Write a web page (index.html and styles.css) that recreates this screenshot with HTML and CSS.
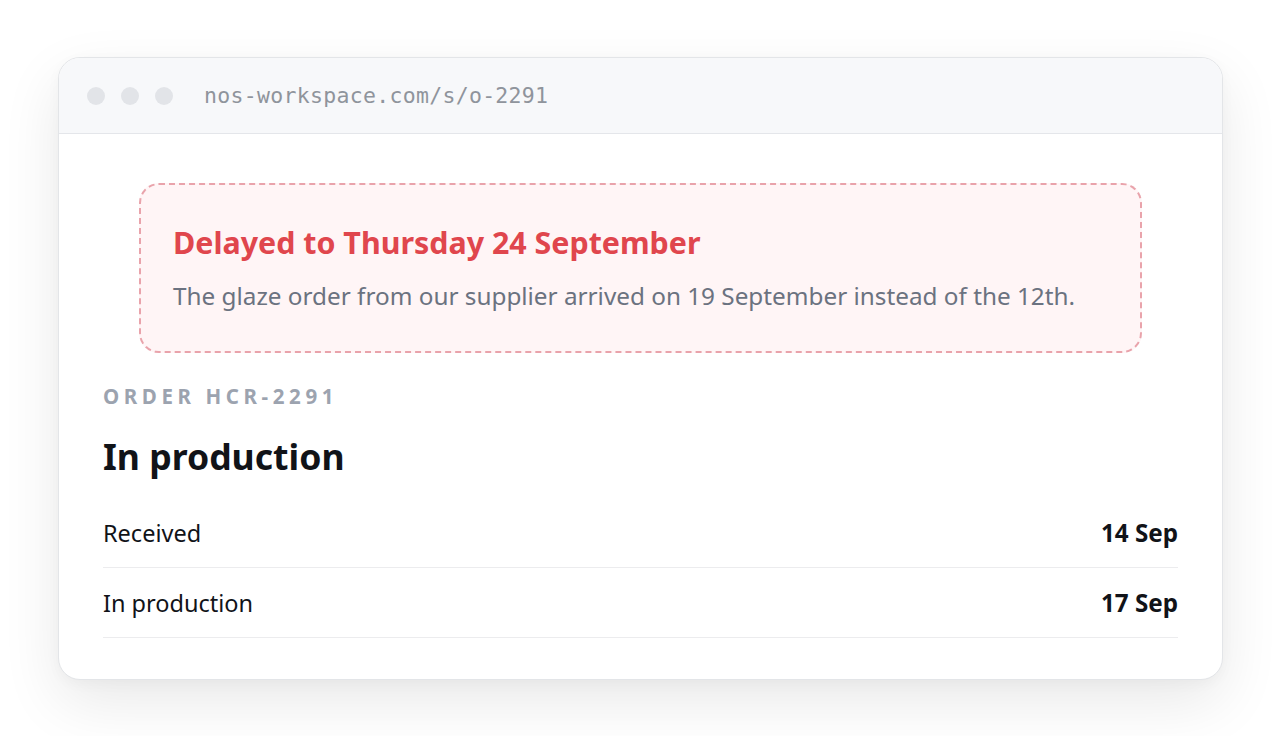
FILE: index.html
```html
<!DOCTYPE html>
<html lang="en">
<head>
<meta charset="utf-8">
<title>Order HCR-2291</title>
<link rel="stylesheet" href="styles.css">
</head>
<body>
  <div class="window">
    <div class="titlebar">
      <div class="dots"><span class="dot"></span><span class="dot"></span><span class="dot"></span></div>
      <div class="url">nos-workspace.com/s/o-2291</div>
    </div>
    <div class="content">
      <div class="alert">
        <div class="alert-title">Delayed to Thursday 24 September</div>
        <div class="alert-text">The glaze order from our supplier arrived on 19 September instead of the 12th.</div>
      </div>
      <div class="eyebrow">ORDER HCR-2291</div>
      <h1 class="status">In production</h1>
      <div class="rows">
        <div class="row"><span class="label">Received</span><span class="date">14 Sep</span></div>
        <div class="row"><span class="label">In production</span><span class="date">17 Sep</span></div>
      </div>
    </div>
  </div>
</body>
</html>
```

FILE: styles.css
```css
* { box-sizing: border-box; }
html, body { margin: 0; background: #ffffff; }
body {
  padding: 57px 57px 57px 58px;
  font-family: "Noto Sans", "Open Sans", sans-serif;
  color: #111318;
}
.window {
  background: #fff;
  border: 1px solid #e3e5e8;
  border-radius: 22px;
  overflow: hidden;
  box-shadow: 0 22px 60px rgba(0,0,0,0.09), 0 4px 14px rgba(0,0,0,0.03);
}
.titlebar {
  height: 76px;
  background: #f7f8fa;
  border-bottom: 1px solid #e4e6ea;
  display: flex;
  align-items: center;
  padding-left: 28px;
}
.dots { display: flex; gap: 16px; }
.dot {
  width: 18px; height: 18px; border-radius: 50%;
  background: #e2e4e8;
}
.url {
  margin-left: 31px;
  font-family: "DejaVu Sans Mono", "Liberation Mono", monospace;
  font-size: 21.5px;
  color: #8f949c;
  letter-spacing: 0.3px;
}
.content {
  padding: 49px 44px 41px;
}
.alert {
  margin: 0 36px;
  border: 2px dashed #e9a3ab;
  background: #fff5f6;
  border-radius: 20px;
  padding: 38px 32px 39px;
}
.alert-title {
  font-size: 30.4px;
  font-weight: 700;
  color: #e0464d;
  line-height: 40px;
}
.alert-text {
  margin-top: 17px;
  font-size: 24.3px;
  color: #6b7280;
  line-height: 32px;
}
.eyebrow {
  margin-top: 29px;
  font-size: 20.5px;
  font-weight: 700;
  letter-spacing: 4.6px;
  color: #9ca3af;
  line-height: 28px;
}
.status {
  margin: 23px 0 19px;
  font-size: 35.6px;
  font-weight: 700;
  line-height: 46px;
  color: #111318;
}
.row {
  display: flex;
  justify-content: space-between;
  align-items: center;
  height: 70px;
  border-bottom: 1px solid #ececee;
  font-size: 23.5px;
}
.label { color: #111318; }
.date { font-weight: 700; color: #111318; font-size: 24.2px; }
```
